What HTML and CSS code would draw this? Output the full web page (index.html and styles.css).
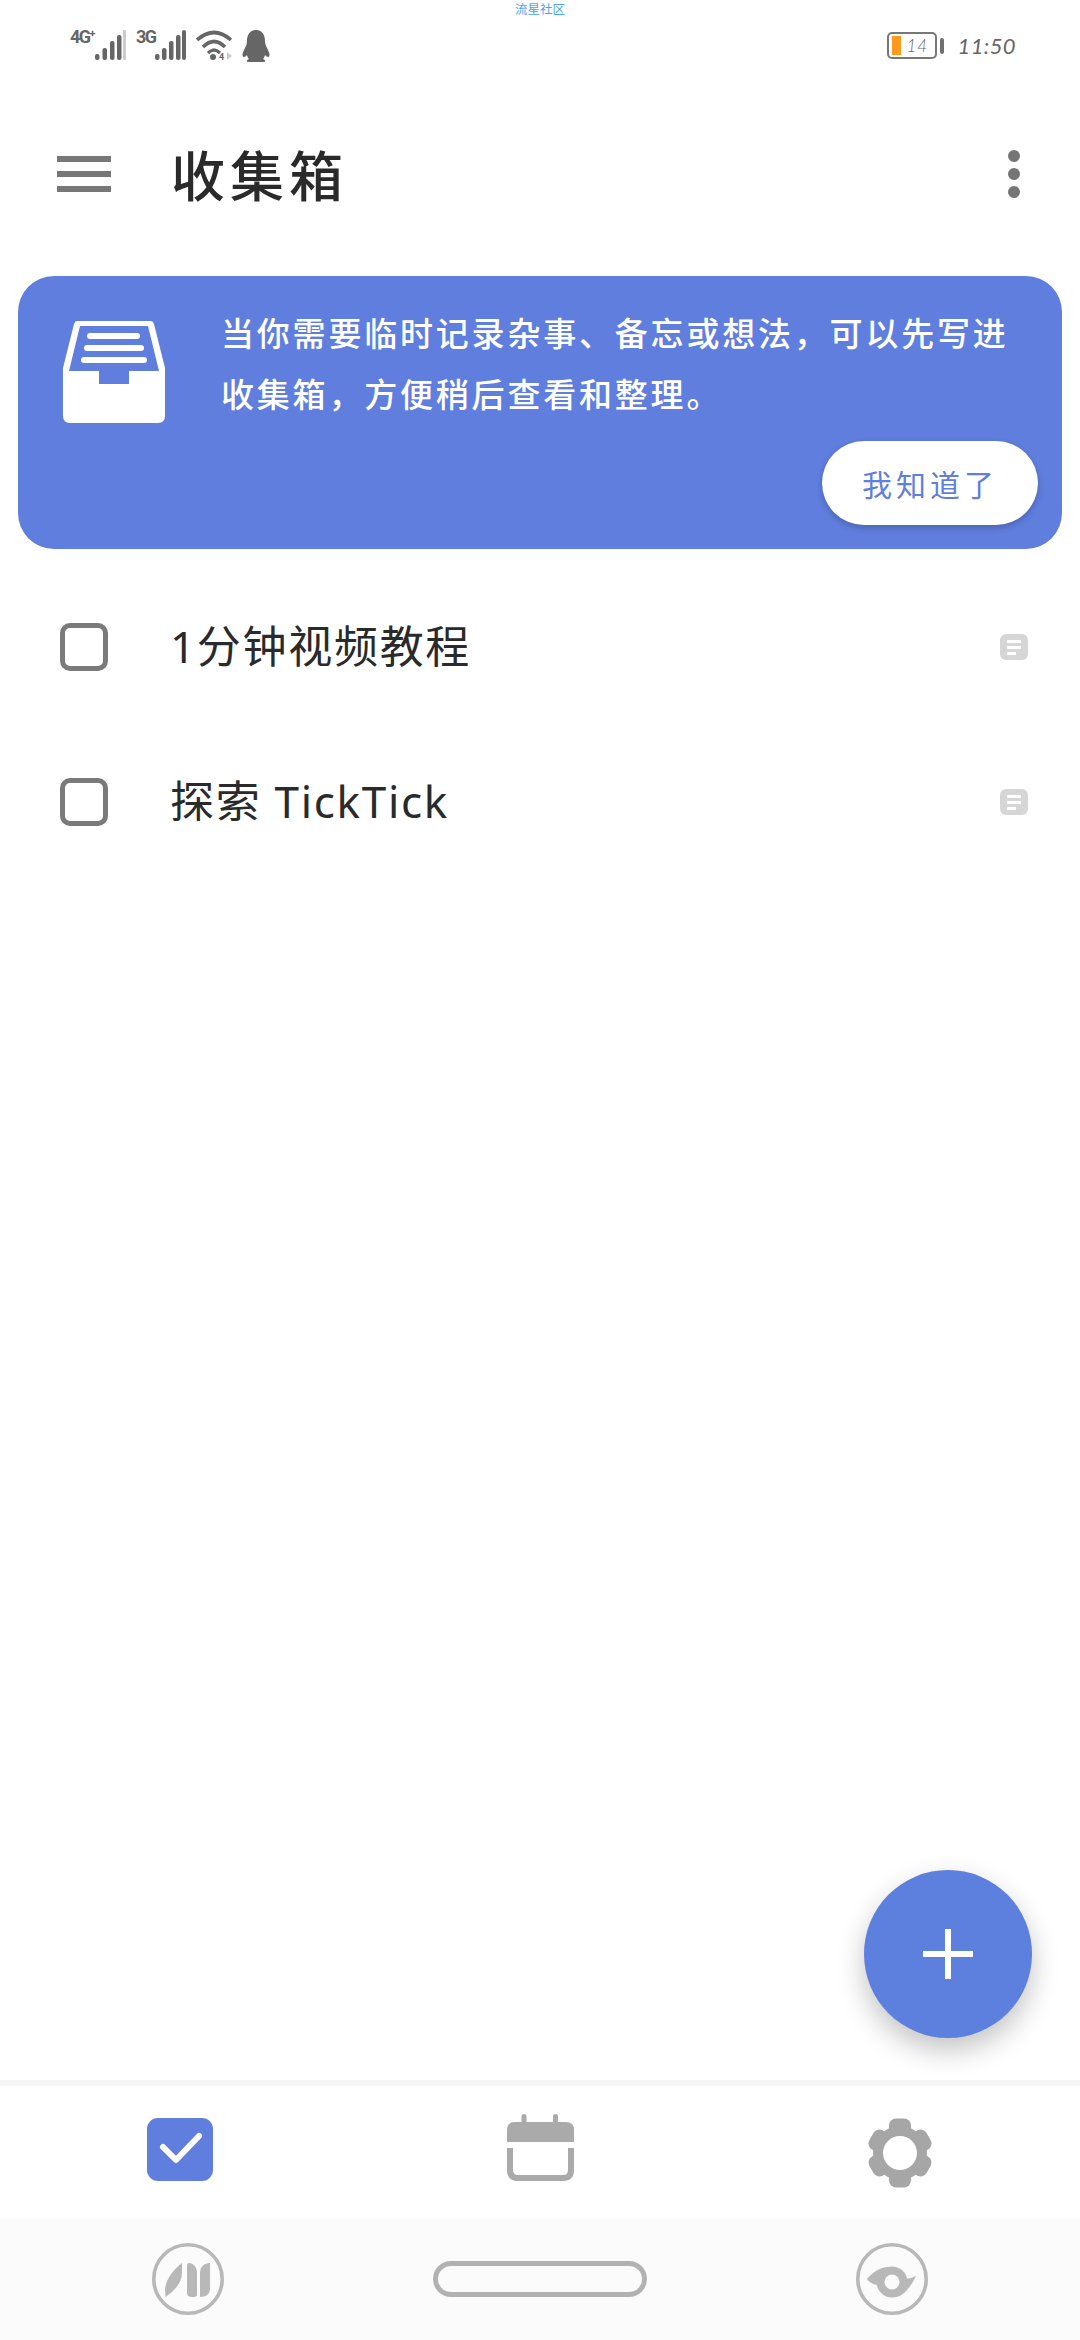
FILE: index.html
```html
<!DOCTYPE html>
<html lang="zh">
<head>
  <meta charset="UTF-8" />
  <meta name="viewport" content="width=device-width, initial-scale=1.0"/>
  <title>收集箱</title>
  <link rel="stylesheet" href="styles.css">
</head>
<body>
  <div class="page">
    <div class="carrier-tag">流星社区</div>

    <div class="status">
      <div class="status-left">
        <div class="signal">
          <span class="net net-wide">4G<sup>+</sup></span>
          <svg class="bars" width="32" height="30" viewBox="0 0 32 30">
            <rect x="1" y="24" width="4.5" height="6" rx="2"/>
            <rect x="8.5" y="18" width="4.5" height="12" rx="2"/>
            <rect x="16" y="11" width="4.5" height="19" rx="2"/>
            <rect x="23" y="5" width="4.5" height="25" rx="2"/>
            <rect class="bar-off" x="29" y="0" width="3" height="30" rx="1"/>
          </svg>
        </div>
        <div class="signal">
          <span class="net">3G</span>
          <svg class="bars" width="32" height="30" viewBox="0 0 32 30">
            <rect x="1" y="24" width="4.5" height="6" rx="2"/>
            <rect x="8" y="18" width="4.5" height="12" rx="2"/>
            <rect x="15" y="11" width="4.5" height="19" rx="2"/>
            <rect x="22" y="5" width="4.5" height="25" rx="2"/>
            <rect x="28" y="0" width="4" height="30" rx="2"/>
          </svg>
        </div>
        <svg class="wifi" width="36" height="36" viewBox="0 0 36 36">
          <path d="M1 10 Q18 -5 35 10" fill="none" stroke="#666" stroke-width="3.6"/>
          <path d="M7 17 Q18 6 29 17" fill="none" stroke="#666" stroke-width="3.6"/>
          <path d="M12 23 Q18 17 24 23" fill="none" stroke="#666" stroke-width="3.2"/>
          <circle cx="17" cy="27" r="3" fill="#666"/>
          <text x="23" y="30" font-size="9" font-weight="700" font-family="Roboto" fill="#666">4</text>
          <path d="M31 22 L36 26 L31 30Z" fill="#ccc"/>
        </svg>
        <svg class="qq" width="28" height="32" viewBox="0 0 28 32">
          <path d="M14 0 C7 0 5 6 5 11 C5 14 4 16 2 20 C0 24 0 27 2 27 C3 27 4 26 5 25 C5.500 27 6 28 7 29 C4 30 4 32 7 32 H21 C24 32 24 30 21 29 C22 28 22.500 27 23 25 C24 26 25 27 26 27 C28 27 28 24 26 20 C24 16 23 14 23 11 C23 6 21 0 14 0Z" fill="#666"/>
        </svg>
      </div>
      <div class="status-right">
        <div class="battery"><span class="battery-fill"></span><span class="battery-num">14</span></div>
        <span class="battery-nub"></span>
        <span class="time">11:50</span>
      </div>
    </div>

    <div class="appbar">
      <div class="menu"><span></span><span></span><span></span></div>
      <h1 class="title">收集箱</h1>
      <div class="more"><span></span><span></span><span></span></div>
    </div>

    <div class="banner">
      <div class="banner-top">
        <svg class="inbox" width="102" height="102" viewBox="0 0 102 102">
          <path fill="#fff" fill-rule="evenodd" d="M14 0 H88 Q90 0 91 3 L102 47 V95 Q102 102 95 102 H7 Q0 102 0 95 V47 L11 3 Q12 0 14 0Z M17 5 H85 L96 50 H66 V63 H36 V50 H6Z"/>
          <rect x="24" y="12" width="53" height="6" rx="3" fill="#fff"/>
          <rect x="21" y="24" width="60" height="6" rx="3" fill="#fff"/>
          <rect x="18" y="36" width="66" height="6" rx="3" fill="#fff"/>
        </svg>
        <p class="banner-text">当你需要临时记录杂事、备忘或想法&#xFF0C;可以先写进收集箱&#xFF0C;方便稍后查看和整理。</p>
      </div>
      <div class="banner-actions">
        <button class="got-it">我知道了</button>
      </div>
    </div>

    <div class="list">
      <div class="row">
        <span class="check"></span>
        <span class="row-title">1分钟视频教程</span>
        <svg class="note" width="28" height="26" viewBox="0 0 28 26">
          <rect width="28" height="26" rx="6" fill="#d6d6d6"/>
          <rect x="7" y="6" width="14" height="3" fill="#fff"/>
          <rect x="7" y="12" width="14" height="3" fill="#fff"/>
          <rect x="7" y="18" width="9" height="3" fill="#fff"/>
        </svg>
      </div>
      <div class="row">
        <span class="check"></span>
        <span class="row-title">探索 TickTick</span>
        <svg class="note" width="28" height="26" viewBox="0 0 28 26">
          <rect width="28" height="26" rx="6" fill="#d6d6d6"/>
          <rect x="7" y="6" width="14" height="3" fill="#fff"/>
          <rect x="7" y="12" width="14" height="3" fill="#fff"/>
          <rect x="7" y="18" width="9" height="3" fill="#fff"/>
        </svg>
      </div>
    </div>

    <button class="fab">
      <svg width="50" height="50" viewBox="0 0 50 50">
        <rect x="22" y="0" width="6" height="50" fill="#fff"/>
        <rect x="0" y="22" width="50" height="6" fill="#fff"/>
      </svg>
    </button>

    <div class="tabbar">
      <div class="tab">
        <svg class="tab-icon-low" width="66" height="63" viewBox="0 0 66 63">
          <rect width="66" height="63" rx="11" fill="#5f7edd"/>
          <path d="M16 29 L29 42 L52 18" fill="none" stroke="#fff" stroke-width="6" stroke-linecap="round" stroke-linejoin="round"/>
        </svg>
      </div>
      <div class="tab">
        <svg width="67" height="67" viewBox="0 0 67 67">
          <path d="M0 28 V16 Q0 8 8 8 H59 Q67 8 67 16 V28Z" fill="#aaa"/>
          <rect x="14.500" y="0" width="5" height="12" rx="2.500" fill="#aaa"/>
          <rect x="46" y="0" width="5" height="12" rx="2.500" fill="#aaa"/>
          <path d="M3 34 V56 Q3 64 11 64 H56 Q64 64 64 56 V34" fill="none" stroke="#aaa" stroke-width="6"/>
        </svg>
      </div>
      <div class="tab">
        <svg class="tab-icon-low" width="70" height="70" viewBox="-35 -35 70 70">
          <circle r="27" fill="#a6a6a6"/>
          <rect x="-11" y="-34.500" width="22" height="69" rx="7" fill="#a6a6a6"/>
          <rect x="-11" y="-33" width="22" height="66" rx="7" fill="#a6a6a6" transform="rotate(60)"/>
          <rect x="-11" y="-33" width="22" height="66" rx="7" fill="#a6a6a6" transform="rotate(120)"/>
          <circle r="17" fill="#fff"/>
        </svg>
      </div>
    </div>

    <div class="navbar">
      <svg width="72" height="72" viewBox="0 0 72 72">
        <circle cx="36" cy="36" r="34.200" fill="none" stroke="#b8b8b8" stroke-width="3.600"/>
        <path d="M30 20 C22 26 14 36 13 46 L13.500 54 C22 48 30 40 30 30Z" fill="#b8b8b8"/>
        <path d="M35 22 Q35 20 37 20 C41 20 45 24 45 30 V52 Q45 54 40 54 Q35 54 35 50Z" fill="#b8b8b8"/>
        <path d="M48 30 C48 24 52 20 58 20 V46 C58 51 54 54 48 54Z" fill="#b8b8b8"/>
      </svg>
      <span class="home-pill"></span>
      <svg width="72" height="72" viewBox="0 0 72 72">
        <circle cx="36" cy="36" r="34.200" fill="none" stroke="#b8b8b8" stroke-width="3.600"/>
        <circle cx="36" cy="39" r="11.500" fill="none" stroke="#b8b8b8" stroke-width="8"/>
        <path d="M11 36 C16 30 24 24 32 24 L24 42 C20 42 14 41 11 36Z" fill="#b8b8b8"/>
        <path d="M60 33 C56 42 48 53 40 54 L48 36 C52 36 56 35 60 33Z" fill="#b8b8b8"/>
      </svg>
    </div>
  </div>
</body>
</html>
```

FILE: styles.css
```css
* {
  box-sizing: border-box;
}

body {
  margin: 0;
  background: #fff;
  font-family: "Noto Sans", "Noto Sans CJK SC", sans-serif;
}

.page {
  position: relative;
  width: 1080px;
  height: 2340px;
  display: flex;
  flex-direction: column;
  overflow: hidden;
  background: #fff;
}

.carrier-tag {
  position: absolute;
  top: 0;
  left: 515px;
  font-family: "Noto Sans CJK SC", sans-serif;
  font-size: 12.5px;
  line-height: 18px;
  color: #4ba3f1;
}

/* status bar */
.status {
  height: 80px;
  padding: 30px 64px 0 70px;
  display: flex;
  justify-content: space-between;
  align-items: flex-start;
  color: #666;
}

.status-left {
  display: flex;
  align-items: flex-start;
  gap: 10px;
}

.signal {
  display: flex;
  align-items: flex-start;
}

.net {
  width: 20px;
  margin-top: -3px;
  margin-right: -2px;
  font-family: "Roboto", sans-serif;
  font-size: 18px;
  font-weight: 700;
  line-height: 20px;
  letter-spacing: -1.5px;
  white-space: nowrap;
}

.net-wide {
  width: 26px;
}

.net sup {
  font-size: 11px;
  line-height: 0;
  vertical-align: 6px;
}

.bars {
  fill: #666;
}

.bars .bar-off {
  fill: #ccc;
}

.status-right {
  display: flex;
  align-items: center;
  margin-top: 2px;
}

.battery {
  width: 50px;
  height: 27px;
  padding: 2px 3px;
  border: 2px solid #777;
  border-radius: 5px;
  display: flex;
  align-items: stretch;
}

.battery-fill {
  width: 9px;
  background: #ff9a1f;
}

.battery-num {
  margin-left: 5px;
  font-family: "Lato", sans-serif;
  font-size: 17px;
  font-style: italic;
  font-weight: 300;
  line-height: 20px;
  letter-spacing: 1px;
}

.battery-nub {
  width: 4px;
  height: 16px;
  margin-left: 3px;
  border-radius: 2px;
  background: #707070;
}

.time {
  margin-left: 13px;
  font-family: "Lato", sans-serif;
  font-size: 22px;
  font-style: italic;
  font-weight: 400;
  letter-spacing: 0.4px;
  line-height: 27px;
}

/* app bar */
.appbar {
  height: 188px;
  padding: 0 60px 0 57px;
  display: flex;
  align-items: center;
  gap: 60px;
}

.menu {
  width: 54px;
  display: flex;
  flex-direction: column;
  gap: 9px;
}

.menu span {
  height: 6px;
  background: #777;
}

.title {
  flex: 1;
  margin: 0;
  font-family: "Noto Sans CJK SC", sans-serif;
  font-size: 54px;
  font-weight: 500;
  letter-spacing: 5px;
  line-height: 60px;
  color: #2a2a2a;
}

.more {
  display: flex;
  flex-direction: column;
  gap: 6px;
}

.more span {
  width: 12px;
  height: 12px;
  border-radius: 50%;
  background: #757575;
}

/* banner */
.banner {
  height: 273px;
  margin: 8px 18px 0;
  padding: 26px 24px 24px 45px;
  border-radius: 36px;
  background: #5f7edd;
}

.banner-top {
  display: flex;
  align-items: flex-start;
  gap: 56px;
}

.inbox {
  flex-shrink: 0;
  margin-top: 19px;
}

.banner-text {
  width: 800px;
  margin: 0;
  font-family: "Noto Sans CJK SC", sans-serif;
  font-size: 33px;
  font-weight: 500;
  letter-spacing: 2.8px;
  line-height: 61px;
  color: #fff;
}

.banner-actions {
  margin-top: 17px;
  display: flex;
  justify-content: flex-end;
}

.got-it {
  width: 216px;
  height: 84px;
  border: none;
  border-radius: 42px;
  background: #fff;
  box-shadow: 0 3px 6px rgba(0, 0, 0, 0.2);
  font-family: "Noto Sans CJK SC", sans-serif;
  font-size: 30px;
  letter-spacing: 4px;
  color: #5f7edd;
}

/* list */
.list {
  flex: 1;
  padding-top: 20px;
}

.row {
  height: 155px;
  padding: 0 52px 0 60px;
  display: flex;
  align-items: center;
}

.check {
  width: 48px;
  height: 48px;
  border: 5px solid #7a7a7a;
  border-radius: 10px;
}

.row-title {
  flex: 1;
  margin-left: 62px;
  padding-bottom: 5px;
  font-size: 44px;
  letter-spacing: 1.7px;
  color: #2a2a2a;
}

/* floating button, sits over the list */
.fab {
  position: absolute;
  right: 48px;
  bottom: 302px;
  width: 168px;
  height: 168px;
  padding: 0;
  border: none;
  border-radius: 50%;
  background: #5d7fde;
  box-shadow: 0 12px 28px rgba(0, 0, 0, 0.24);
  display: flex;
  justify-content: center;
  align-items: center;
}

/* bottom tabs */
.tabbar {
  height: 138px;
  padding-top: 28px;
  border-top: 6px solid #f6f6f6;
  display: grid;
  grid-template-columns: repeat(3, 1fr);
  background: #fff;
}

.tab {
  display: flex;
  justify-content: center;
  align-items: flex-start;
}

.tab-icon-low {
  margin-top: 4px;
}

/* system nav */
.navbar {
  height: 122px;
  padding: 0 152px;
  display: flex;
  justify-content: space-between;
  align-items: center;
  background: #fbfbfb;
}

.home-pill {
  width: 214px;
  height: 36px;
  border: 5px solid #b2b2b2;
  border-radius: 18px;
}
```
